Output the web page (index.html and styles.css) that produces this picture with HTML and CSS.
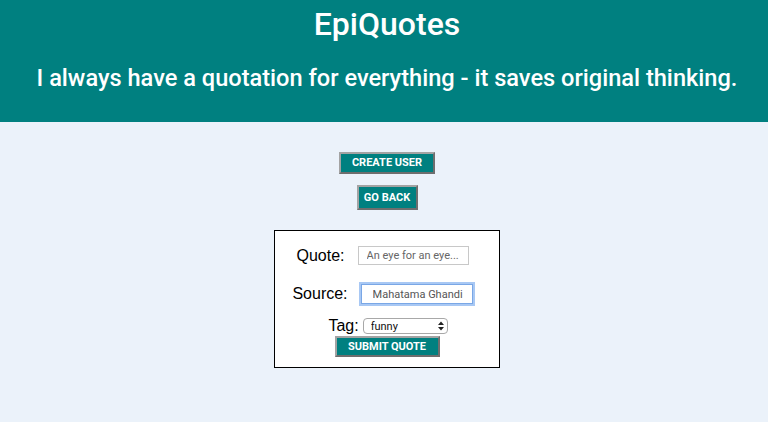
FILE: index.html
```html
<!DOCTYPE html>
<html lang="en">
<head>
    <meta charset="UTF-8">
    <title>EpiQuotes</title>
    <link rel="stylesheet" href="styles.css">
</head>
<body>
    <div class="header">
        <h1>EpiQuotes</h1>
        <h2>I always have a quotation for everything - it saves original thinking.</h2>
    </div>

    <div class="main">
        <button class="btn btn-create">CREATE USER</button>
        <button class="btn btn-back">GO BACK</button>

        <form class="quote-form">
            <div class="row row-quote">
                <label for="quote">Quote:</label>
                <input type="text" id="quote" placeholder="An eye for an eye...">
            </div>
            <div class="row row-source">
                <label for="source">Source:</label>
                <input type="text" id="source" class="focused" placeholder="Mahatama Ghandi">
            </div>
            <div class="row row-tag">
                <label for="tag">Tag:</label>
                <span class="select-wrap">
                    <select id="tag">
                        <option>funny</option>
                        <option>inspirational</option>
                        <option>wise</option>
                    </select>
                    <svg class="arrows" width="6" height="10" viewBox="0 0 6 10">
                        <path d="M0 4 L3 0.5 L6 4 Z M0 6 L3 9.5 L6 6 Z" fill="#222"/>
                    </svg>
                </span>
            </div>
            <button type="submit" class="btn btn-submit">SUBMIT QUOTE</button>
        </form>
    </div>
</body>
</html>
```

FILE: styles.css
```css
body {
    margin: 0;
    padding-left: 6px;
    background-color: #ebf2fa;
    font-family: Roboto, "Liberation Sans", sans-serif;
    height: 422px;
    overflow: hidden;
}
.header {
    background-color: #008080;
    color: white;
    text-align: center;
    height: 122px;
    margin-left: -6px;
    padding-left: 6px;
}
.header h1 {
    margin: 0;
    padding-top: 5px;
    font-size: 32px;
    font-weight: 500;
    line-height: 38px;
}
.header h2 {
    margin: 0;
    padding-top: 20px;
    font-size: 23.6px;
    font-weight: 500;
    line-height: 30px;
}
.main {
    display: flex;
    flex-direction: column;
    align-items: center;
    padding-top: 30px;
}
.btn {
    background-color: #008080;
    color: white;
    font-family: Roboto, "Liberation Sans", sans-serif;
    font-size: 11px;
    font-weight: 700;
    border: 2px solid;
    border-color: #a3a3a3 #6e6e6e #6e6e6e #a3a3a3;
    cursor: pointer;
    line-height: 14px;
}
.btn-create {
    width: 96px;
    height: 22px;
    padding: 0;
}
.btn-back {
    width: 61px;
    height: 25px;
    padding: 0;
    margin-top: 11px;
}
.btn-submit {
    width: 105px;
    height: 21px;
    padding: 0;
    margin-top: 1px;
}
.quote-form {
    margin-top: 20px;
    width: 224px;
    height: 136px;
    background-color: white;
    border: 1px solid black;
    display: flex;
    flex-direction: column;
    align-items: center;
    font-family: "Liberation Sans", Arial, sans-serif;
}
.row {
    display: flex;
    align-items: center;
    font-size: 16px;
}
.row-quote {
    margin-top: 15px;
    gap: 13px;
    margin-right: 9px;
}
.row-source {
    margin-top: 19px;
    gap: 13px;
    margin-right: 9px;
}
.row-tag {
    margin-top: 13px;
    gap: 4px;
    margin-left: 2px;
}
.row input {
    box-sizing: border-box;
    height: 19px;
    width: 111px;
    border: 1px solid #c8c8c8;
    padding: 0 0 0 8px;
    font-family: Roboto, "Liberation Sans", sans-serif;
    font-size: 11px;
    color: #555;
    outline: none;
}
.row input::placeholder {
    color: #666;
}
.row input.focused {
    width: 112px;
    height: 20px;
    border: 1px solid #7aa7e6;
    box-shadow: 0 0 0 2px #a8c8f4;
    padding-left: 11px;
}
.row input.focused::placeholder {
    color: #555;
}
.select-wrap {
    position: relative;
    display: inline-block;
}
.select-wrap select {
    appearance: none;
    -webkit-appearance: none;
    box-sizing: border-box;
    width: 85px;
    height: 16px;
    border: 1px solid #a8a8a8;
    border-radius: 4px;
    background: white;
    font-family: Roboto, "Liberation Sans", sans-serif;
    font-size: 11px;
    color: #111;
    padding: 0 0 0 7px;
    display: block;
}
.arrows {
    position: absolute;
    right: 4px;
    top: 3px;
}
```
